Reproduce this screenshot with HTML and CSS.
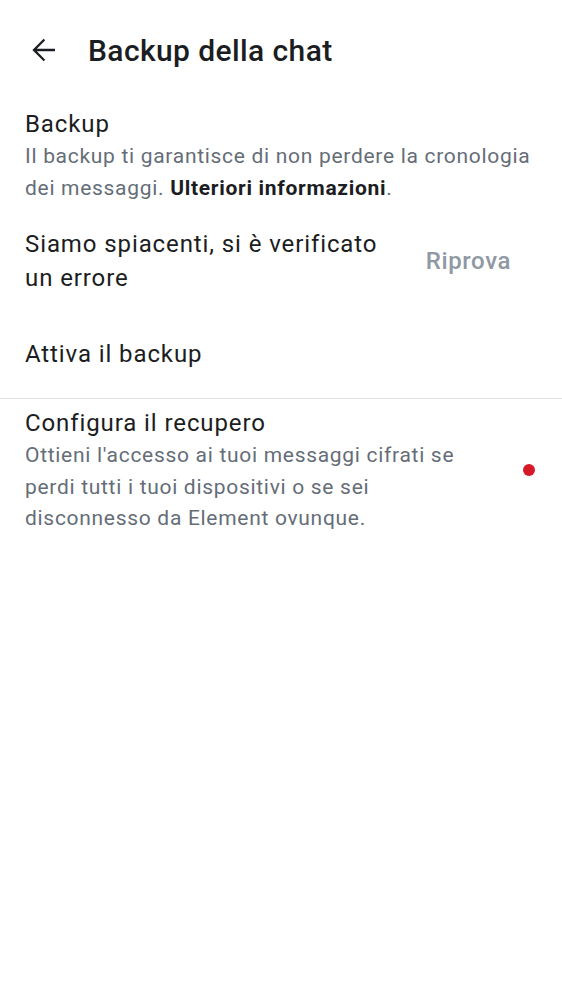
FILE: index.html
```html
<!DOCTYPE html>
<html lang="it">
<head>
<meta charset="utf-8">
<link rel="stylesheet" href="styles.css">
</head>
<body>
<header class="topbar">
  <button class="back" aria-label="Indietro">
    <svg width="36" height="36" viewBox="0 0 24 24"><path d="M20 11.1H7.9l5.55-5.55L12.4 4.5 4.9 12l7.5 7.5 1.05-1.05L7.9 12.9H20z" fill="#1b1d22"/></svg>
  </button>
  <h1 class="title">Backup della chat</h1>
</header>
<section class="block backup">
  <div class="item-title">Backup</div>
  <div class="item-desc">Il backup ti garantisce di non perdere la cronologia dei messaggi. <b>Ulteriori informazioni</b>.</div>
</section>
<section class="row error">
  <div class="item-title error-text">Siamo spiacenti, si è verificato un errore</div>
  <div class="retry">Riprova</div>
</section>
<section class="row enable">
  <div class="item-title">Attiva il backup</div>
</section>
<div class="divider"></div>
<section class="row recovery">
  <div class="recovery-text">
    <div class="item-title">Configura il recupero</div>
    <div class="item-desc">Ottieni l'accesso ai tuoi messaggi cifrati se perdi tutti i tuoi dispositivi o se sei disconnesso da Element ovunque.</div>
  </div>
  <span class="dot"></span>
</section>
</body>
</html>
```
FILE: styles.css
```css
html, body {
  margin: 0;
  padding: 0;
  background: #ffffff;
  font-family: Roboto, "Noto Sans", sans-serif;
  color: #1b1d22;
}
.topbar {
  height: 100px;
  display: flex;
  align-items: center;
  padding-left: 25px;
}
.back {
  background: none;
  border: 0;
  padding: 0;
  width: 36px;
  height: 36px;
  display: flex;
}
.title {
  margin: 0 0 0 27px;
  font-size: 30px;
  font-weight: 500;
  letter-spacing: 0.4px;
}
.block {
  padding: 7px 25px 0 25px;
}
.item-title {
  font-size: 24px;
  line-height: 34px;
  letter-spacing: 0.9px;
}
.item-desc {
  font-size: 21px;
  line-height: 31.5px;
  letter-spacing: 0.7px;
  color: #656d77;
}
.item-desc b {
  color: #1b1d22;
  font-weight: 700;
}
.row {
  display: flex;
  align-items: center;
  padding: 0 25px;
}
.error {
  padding-top: 23px;
  padding-right: 51px;
}
.error-text {
  width: 372px;
}
.retry {
  margin-left: auto;
  font-size: 24px;
  font-weight: 500;
  letter-spacing: 0.6px;
  color: #8f98a3;
}
.enable {
  padding-top: 42px;
  padding-bottom: 27px;
}
.divider {
  height: 1px;
  background: #e1e3e6;
}
.recovery {
  padding-top: 7px;
  padding-right: 27px;
}
.recovery-text {
  width: 462px;
}
.dot {
  margin-left: auto;
  width: 12px;
  height: 12px;
  border-radius: 50%;
  background: #d51928;
}
```
